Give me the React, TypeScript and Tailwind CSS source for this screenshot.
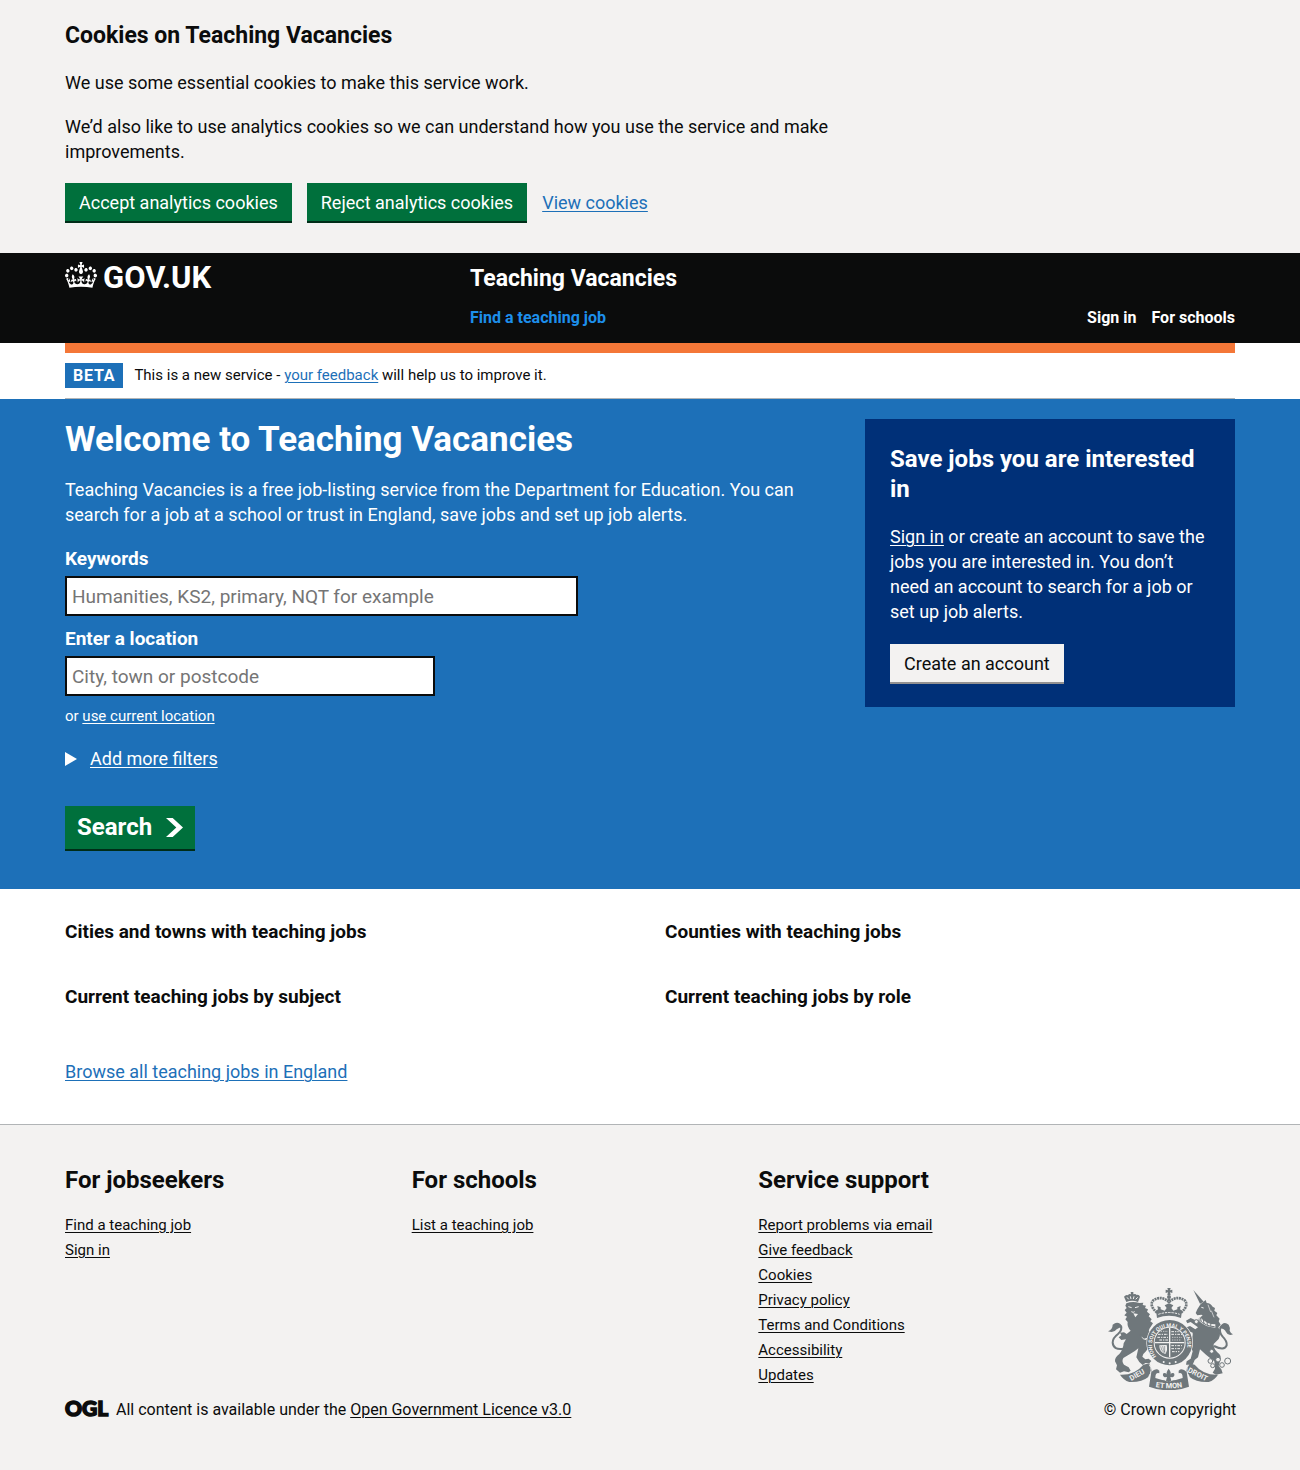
import type { ReactNode } from "react";

function Crown() {
  return (
    <svg aria-hidden="true" className="h-[26px] w-8" viewBox="0 0 132 97" preserveAspectRatio="none" fill="currentColor">
      <path d="M25 30.2c3.5 1.5 7.7-.2 9.1-3.7 1.5-3.6-.2-7.8-3.9-9.2-3.6-1.4-7.6.3-9.1 3.9-1.4 3.5.3 7.5 3.9 9zM9 39.5c3.6 1.5 7.8-.2 9.2-3.7 1.5-3.6-.2-7.8-3.9-9.1-3.6-1.5-7.6.2-9.1 3.8-1.4 3.5.3 7.5 3.8 9zM4.4 57.2c3.5 1.5 7.7-.2 9.1-3.8 1.5-3.6-.2-7.7-3.9-9.1-3.5-1.5-7.6.3-9.1 3.8-1.4 3.5.3 7.6 3.9 9.1zm38.3-21.4c3.5 1.5 7.7-.2 9.1-3.8 1.5-3.6-.2-7.7-3.9-9.1-3.6-1.5-7.6.3-9.1 3.8-1.3 3.6.4 7.7 3.9 9.1zm64.4-5.6c-3.6 1.5-7.8-.2-9.1-3.7-1.5-3.6.2-7.8 3.8-9.2 3.6-1.4 7.7.3 9.2 3.9 1.3 3.5-.4 7.5-3.9 9zm15.9 9.3c-3.6 1.5-7.7-.2-9.1-3.7-1.5-3.6.2-7.8 3.7-9.1 3.6-1.5 7.7.2 9.2 3.8 1.5 3.5-.3 7.5-3.8 9zm4.7 17.7c-3.6 1.5-7.8-.2-9.2-3.8-1.5-3.6.2-7.7 3.9-9.1 3.6-1.5 7.7.3 9.2 3.8 1.3 3.5-.4 7.6-3.9 9.1zM89.3 35.8c-3.6 1.5-7.8-.2-9.2-3.8-1.4-3.6.2-7.7 3.9-9.1 3.6-1.5 7.7.3 9.2 3.8 1.4 3.6-.3 7.7-3.9 9.1zM69.7 17.7l8.9 4.7V9.3l-8.9 2.8c-.2-.3-.5-.6-.9-.9L72.4 0H59.6l3.5 11.2c-.3.3-.6.5-.9.9l-8.8-2.8v13.1l8.8-4.7c.3.3.6.7.9.9l-5 15.4v.1c-.2.8-.4 1.6-.4 2.4 0 4.1 3.1 7.5 7 8.1h.2c.3 0 .7.1 1 .1.4 0 .7 0 1-.1h.2c4-.6 7.1-4.1 7.1-8.1 0-.8-.1-1.7-.4-2.4V34l-5.1-15.4c.4-.2.7-.6 1-.9zM66 92.8c16.9 0 32.8 1.1 47.1 3.2 4-16.9 8.9-26.7 14-33.5l-9.6-3.4c1 4.9 1.1 7.2 0 10.2-1.5-1.4-3-4.3-4.2-8.7L108.6 76c2.8-2 5-3.2 7.5-3.3-4.4 9.4-10 11.9-13.6 11.2-4.3-.8-6.3-4.6-5.6-7.9 1-4.7 5.7-5.9 8-.5 4.3-8.7-3-11.4-7.6-8.8 7.1-7.2 7.9-13.5 2.1-21.1-8 6.1-8.1 12.3-4.5 20.8-4.7-5.4-12.1-2.5-9.5 6.2 3.4-5.2 7.9-2 7.2 3.1-.6 4.3-6.4 7.8-13.5 7.2-10.3-.9-10.9-8-11.2-13.8 2.5-.5 7.1 1.8 11 7.3L80.2 60c-4.1 4.4-8 5.3-12.3 5.4 1.4-4.4 8-11.6 8-11.6H55.5s6.4 7.2 7.9 11.6c-4.2-.1-8-1-12.3-5.4l1.4 16.4c3.9-5.5 8.5-7.7 10.9-7.3-.3 5.8-.9 12.8-11.1 13.8-7.2.6-12.9-2.9-13.5-7.2-.7-5 3.8-8.3 7.1-3.1 2.7-8.7-4.6-11.6-9.4-6.2 3.7-8.5 3.6-14.7-4.6-20.8-5.8 7.6-5 13.9 2.2 21.1-4.7-2.6-11.9.1-7.7 8.8 2.3-5.5 7.1-4.2 8.1.5.7 3.3-1.3 7.1-5.7 7.9-3.5.7-9-1.8-13.5-11.2 2.5.1 4.7 1.3 7.5 3.3l-4.7-15.4c-1.2 4.4-2.7 7.2-4.3 8.7-1.1-3-.9-5.3 0-10.2l-9.5 3.4c5 6.9 9.9 16.7 14 33.5 14.8-2.1 30.8-3.2 47.7-3.2z" />
    </svg>
  );
}

function Crest() {
  const dark = "#6f777b";
  const light = "#f3f2f1";
  return (
    <svg aria-hidden="true" className="h-[102px] w-[125px]" viewBox="36 24 375 306" fill={dark}>
      <defs>
        <path id="garter" d="M181 229 A53 53 0 1 1 261 229" />
        <path id="motto" d="M164 318 Q219 332 274 318" />
      </defs>

      {/* lion's crown */}
      <path d="M91 66 L84 50 Q90 43 96 46 Q99 40 105 43 L104 36 L112 36 L112 43 Q119 40 122 45 Q129 43 132 50 L126 66 Q108 59 91 66 Z" />
      <path d="M93 52 L98 58 M103 49 L105 57 M114 49 L112 57 M125 52 L119 58" stroke={light} strokeWidth="3" />
      {/* lion */}
      <path d="M91 70 Q110 63 130 69 L142 68 L140 75 L150 77 L147 84 L156 88 L153 95 L162 103 L158 109 L167 118 L163 124 L171 130 Q158 146 156 162 L164 186 Q160 204 150 214 Q140 222 139 230 L148 238 L158 236 L166 243 L160 250 L148 249 L140 255 Q128 247 121 232 L127 205 Q116 215 102 222 L82 234 Q76 244 84 254 L98 262 L104 272 L98 277 L84 274 L72 278 L60 268 L63 256 L57 244 Q56 232 70 222 Q82 208 83 190 L90 178 L76 180 L68 172 L76 166 L72 158 L84 157 L92 162 L104 152 Q92 140 95 126 L88 118 L93 110 L85 106 L92 98 L86 90 L92 84 L88 77 Z" />
      <path d="M97 80 l10 3 M117 83 l11 -3 M106 95 q6 4 10 0" fill="none" stroke={light} strokeWidth="3" />
      <path d="M112 100 l6 12 l8 -10 Z" fill={light} />
      <path d="M136 170 Q146 168 154 162 L160 168 L150 180 L142 178 Z" fill={light} />
      <path d="M128 162 Q146 168 158 152 L170 160 L160 172 L144 176 Z" />
      {/* lion's tail */}
      <path d="M84 206 Q52 212 50 188 Q50 174 66 162 Q80 150 74 138 Q68 132 62 140" fill="none" stroke={dark} strokeWidth="6" />
      <path d="M80 142 Q68 120 50 134 Q50 148 36 154 Q54 160 62 148 Q70 142 80 142 Z" />

      {/* horn and unicorn */}
      <path d="M292 30 L323 65 L312 71 Z" />
      <path d="M314 72 L322 66 L329 60 L332 69 Q344 70 350 80 L357 84 L355 92 L364 99 L361 106 L371 116 L368 124 L374 134 L367 142 Q377 160 368 177 L353 192 Q352 206 364 217 Q380 228 372 244 L368 258 L376 268 L380 280 L360 284 L350 278 L357 266 L355 244 Q342 234 330 224 L312 208 L306 232 L296 240 L290 254 L270 254 L272 244 L284 236 L290 214 L280 192 Q292 172 290 158 L276 152 L272 142 L282 138 L298 148 L306 142 L284 126 L274 130 L270 122 L284 114 L302 122 L320 106 L316 104 L304 106 L299 99 L304 88 Z" />
      <path d="M309 116 Q330 138 358 138" fill="none" stroke={light} strokeWidth="10" />
      <path d="M308 118 Q330 140 356 140 M312 113 L316 122 M322 119 L324 131 M333 123 L334 136 M345 125 L344 139" fill="none" stroke={dark} strokeWidth="3" />
      <circle cx="301" cy="125" r="6" fill={light} stroke={dark} strokeWidth="3" />
      <path d="M316 82 l7 2" stroke={light} strokeWidth="3" />
      <path d="M336 74 L344 96 M346 92 L354 112" fill="none" stroke={light} strokeWidth="2" />
      {/* unicorn's tail */}
      <path d="M354 198 Q385 214 392 196 Q394 184 380 170 Q368 156 374 142 Q378 134 386 142" fill="none" stroke={dark} strokeWidth="6" />
      <path d="M370 144 Q382 120 398 134 Q403 142 401 152 Q404 160 411 163 Q396 169 390 156 Q386 146 370 144 Z" />
      {/* chain */}
      <g fill={light} stroke={dark} strokeWidth="3">
        <circle cx="343" cy="243" r="7" />
        <circle cx="350" cy="257" r="6" />
        <circle cx="366" cy="239" r="7" />
        <circle cx="378" cy="255" r="7" />
        <circle cx="395" cy="243" r="9" />
        <circle cx="347" cy="214" r="6" />
      </g>

      {/* royal crown */}
      <path d="M214 24 h10 l-2 7 l7 -2 v10 l-7 -2 l2 8 h-10 l2 -8 l-7 2 v-10 l7 2 Z" />
      <circle cx="219" cy="51" r="6" />
      <path d="M183 98 Q158 76 172 61 Q194 46 217 64 M255 98 Q280 76 266 61 Q244 46 221 64" fill="none" stroke={dark} strokeWidth="8" strokeDasharray="6 2" />
      <path d="M219 56 V92" stroke={dark} strokeWidth="8" strokeDasharray="6 2" />
      <path d="M180 92 L186 88 L184 78 L194 82 L194 88 L206 92 L212 84 L206 76 L219 70 L232 76 L226 84 L232 92 L244 88 L244 82 L254 78 L252 88 L258 92 L255 114 Q219 101 183 114 Z" />
      <path d="M187 103 Q219 92 251 103" fill="none" stroke={light} strokeWidth="3" strokeDasharray="7 3" />

      {/* garter and shield */}
      <circle cx="221" cy="188" r="70" fill={light} />
      <circle cx="221" cy="188" r="68" />
      <text fill={light} fontFamily="Roboto, sans-serif" fontWeight="700" fontSize="16">
        <textPath href="#garter">HONI SOIT QUI MAL Y PENSE</textPath>
      </text>
      <circle cx="221" cy="188" r="48" fill={light} />
      <circle cx="221" cy="188" r="45" />
      <path d="M221 144 V232 M177 188 H265" stroke={light} strokeWidth="4" />
      <path d="M186 163 h30 M184 172 h32 M190 180 h26 M226 155 h22 M226 163 h32 M226 197 h32 M226 206 h30 M228 215 h22" stroke={light} strokeWidth="3" strokeDasharray="8 3 4 3" />
      <path d="M194 154 h22 M228 172 h30 M228 180 h28" stroke={light} strokeWidth="2" strokeDasharray="4 3" />
      <path d="M190 196 q-1 20 18 26 q8 -12 4 -27 Z" fill={light} />
      <path d="M194 199 q1 12 11 20 M200 198 q1 12 7 20 M206 198 v18" fill="none" stroke={dark} strokeWidth="2" />
      <circle cx="203" cy="246" r="3" fill={light} />
      <circle cx="221" cy="250" r="3" fill={light} />
      <circle cx="239" cy="246" r="3" fill={light} />

      {/* scrolls */}
      <path d="M72 284 Q116 286 142 254 L160 250 L168 272 L158 290 Q136 308 100 306 Q82 300 72 284 Z" />
      <path d="M366 284 Q322 286 296 254 L278 250 L270 272 L280 290 Q302 308 338 306 Q356 300 366 284 Z" />
      <path d="M160 254 Q172 270 158 290 M278 254 Q266 270 280 290" fill="none" stroke={light} strokeWidth="3" />
      <path d="M166 276 Q180 262 190 272 L190 280 Q178 276 178 294 Q219 310 260 294 Q260 276 248 280 L248 272 Q258 262 272 276 L279 320 Q219 342 159 320 Z" />
      <g fill={light} fontFamily="Roboto, sans-serif" fontWeight="700" fontSize="22">
        <text transform="translate(106 303) rotate(-30)">DIEU</text>
        <text transform="translate(274 275) rotate(27)">DROIT</text>
        <text>
          <textPath href="#motto" startOffset="50%" textAnchor="middle">ET MON</textPath>
        </text>
      </g>
      {/* fleur-de-lis */}
      <circle cx="218" cy="284" r="21" fill={light} />
      <path d="M218 266 Q228 278 222 286 Q226 276 234 280 Q238 288 230 292 L223 291 L226 302 L218 307 L210 302 L213 291 L206 292 Q198 288 202 280 Q210 276 214 286 Q208 278 218 266 Z" />
    </svg>
  );
}

function OglLogo() {
  return (
    <svg role="img" aria-label="Open Government Licence" className="h-5 w-[41px] overflow-visible" viewBox="0 0 41 20" fill="currentColor">
      <text x="0" y="16" fontFamily="Lato, sans-serif" fontWeight="900" fontSize="21" stroke="currentColor" strokeWidth="1.5">
        OGL
      </text>
    </svg>
  );
}

const link = "underline decoration-1 underline-offset-2";
const blueLink = "text-[#1d70b8] underline decoration-1 underline-offset-2";

function GreenButton({ children }: { children: ReactNode }) {
  return (
    <button type="button" className="bg-[#00703c] px-[14px] pt-2 pb-[7px] leading-[23px] text-white shadow-[0_2px_0_#002d18]">
      {children}
    </button>
  );
}

function FooterColumn({ title, links }: { title: string; links: string[] }) {
  return (
    <section>
      <h2 className="mb-[18px] text-2xl leading-[30px] font-bold">{title}</h2>
      <ul className="text-[15px] leading-[25px]">
        {links.map((text) => (
          <li key={text}>
            <a href="#" className={link}>{text}</a>
          </li>
        ))}
      </ul>
    </section>
  );
}

export default function App() {
  return (
    <div className="bg-white font-[Roboto,sans-serif] text-[18px] leading-[25px] text-[#0b0c0c]">
      <section aria-label="Cookies on Teaching Vacancies" className="bg-[#f3f2f1] pt-5 pb-8">
        <div className="mx-auto w-[90%]">
          <div className="w-2/3">
            <h2 className="mb-[18px] text-[23px] leading-8 font-bold">Cookies on Teaching Vacancies</h2>
            <p className="mb-[19px]">We use some essential cookies to make this service work.</p>
            <p className="mb-[19px]">
              We’d also like to use analytics cookies so we can understand how you use the service and make improvements.
            </p>
          </div>
          <div className="flex items-center gap-[15px]">
            <GreenButton>Accept analytics cookies</GreenButton>
            <GreenButton>Reject analytics cookies</GreenButton>
            <a href="#" className={blueLink}>View cookies</a>
          </div>
        </div>
      </section>

      <header className="bg-[#0b0c0c] text-white">
        <div className="mx-auto flex w-[90%] pt-[9px] pb-[10px]">
          <a href="#" className="flex w-[405px] gap-[6px] self-start">
            <Crown />
            <span className="text-[31px] leading-8 font-bold">GOV.UK</span>
          </a>
          <div className="flex-1">
            <a href="#" className="block text-[23px] leading-[34px] font-bold">Teaching Vacancies</a>
            <nav className="mt-[7px] flex gap-[15px] text-base leading-[30px] font-bold">
              <a href="#" className="mr-auto text-[#1d8feb]">Find a teaching job</a>
              <a href="#">Sign in</a>
              <a href="#">For schools</a>
            </nav>
          </div>
        </div>
      </header>

      <div className="mx-auto flex w-[90%] items-center gap-[11px] border-t-10 border-b border-t-[#f47738] border-b-[#b1b4b6] py-[10px]">
        <strong className="bg-[#1d70b8] px-2 text-base leading-[25px] font-bold tracking-wider text-white">BETA</strong>
        <p className="text-[15px] leading-[25px]">
          This is a new service - <a href="#" className={blueLink}>your feedback</a> will help us to improve it.
        </p>
      </div>

      <main>
        <div className="bg-[#1d70b8] text-white">
          <div className="mx-auto flex w-[90%] items-start justify-between pt-5 pb-10">
            <form className="w-2/3 pr-5" onSubmit={(e) => e.preventDefault()}>
              <h1 className="mb-4 text-[35px] leading-[42px] font-bold">Welcome to Teaching Vacancies</h1>
              <p className="mb-[19px]">
                Teaching Vacancies is a free job-listing service from the Department for Education. You can search for a job at a school or trust in England, save jobs and set up job alerts.
              </p>
              <label htmlFor="keyword" className="mb-[5px] block text-[19px] font-bold">Keywords</label>
              <input
                id="keyword"
                type="text"
                placeholder="Humanities, KS2, primary, NQT for example"
                className="mb-[10px] block h-10 w-full max-w-[513px] border-2 border-[#0b0c0c] bg-white px-[5px] text-[19px] text-[#0b0c0c] placeholder:text-[#757575]"
              />
              <label htmlFor="location" className="mb-[5px] block text-[19px] font-bold">Enter a location</label>
              <input
                id="location"
                type="text"
                placeholder="City, town or postcode"
                className="mb-[10px] block h-10 w-full max-w-[370px] border-2 border-[#0b0c0c] bg-white px-[5px] text-[19px] text-[#0b0c0c] placeholder:text-[#757575]"
              />
              <p className="mb-5 text-[15px] leading-5">
                or <button type="button" className={link}>use current location</button>
              </p>
              <details className="mb-[35px]">
                <summary className="flex list-none items-center gap-[13px]">
                  <svg aria-hidden="true" className="h-[14px] w-3" viewBox="0 0 12 14" fill="currentColor">
                    <path d="M0 0 L12 7 L0 14 Z" />
                  </svg>
                  <span className={link}>Add more filters</span>
                </summary>
              </details>
              <button type="submit" className="flex items-center gap-[14px] bg-[#00703c] px-3 py-[9px] text-2xl leading-[25px] font-bold text-white shadow-[0_2px_0_#002d18]">
                Search
                <svg aria-hidden="true" className="h-[19px] w-[17px]" viewBox="0 0 33 40" preserveAspectRatio="none" fill="currentColor">
                  <path d="M0 0h13l20 20-20 20H0l20-20z" />
                </svg>
              </button>
            </form>

            <aside className="w-[370px] bg-[#003078] p-[25px]">
              <h2 className="mb-5 text-2xl leading-[30px] font-bold">Save jobs you are interested in</h2>
              <p className="mb-5">
                <a href="#" className={link}>Sign in</a> or create an account to save the jobs you are interested in. You don’t need an account to search for a job or set up job alerts.
              </p>
              <button type="button" className="block bg-[#f3f2f1] px-[14px] pt-2 pb-[7px] leading-[23px] text-[#0b0c0c] shadow-[0_2px_0_#929191]">
                Create an account
              </button>
            </aside>
          </div>
        </div>

        <div className="mx-auto w-[90%] pt-[30px] pb-10">
          <div className="grid grid-cols-2 gap-x-[30px] gap-y-10 text-[19px] font-bold">
            <h2>Cities and towns with teaching jobs</h2>
            <h2>Counties with teaching jobs</h2>
            <h2>Current teaching jobs by subject</h2>
            <h2>Current teaching jobs by role</h2>
          </div>
          <p className="mt-[50px]">
            <a href="#" className={blueLink}>Browse all teaching jobs in England</a>
          </p>
        </div>
      </main>

      <footer className="border-t border-[#b1b4b6] bg-[#f3f2f1] pt-10 pb-[50px]">
        <div className="mx-auto flex w-[90%] items-end">
          <div className="flex-1">
            <div className="grid grid-cols-3">
              <FooterColumn title="For jobseekers" links={["Find a teaching job", "Sign in"]} />
              <FooterColumn title="For schools" links={["List a teaching job"]} />
              <FooterColumn
                title="Service support"
                links={["Report problems via email", "Give feedback", "Cookies", "Privacy policy", "Terms and Conditions", "Accessibility", "Updates"]}
              />
            </div>
            <div className="mt-3 flex items-start gap-[10px] text-base leading-5">
              <OglLogo />
              <p>
                All content is available under the <a href="#" className={link}>Open Government Licence v3.0</a>
              </p>
            </div>
          </div>
          <a href="#" className="flex w-[130px] flex-col items-center gap-[10px] text-base leading-5 whitespace-nowrap">
            <Crest />
            © Crown copyright
          </a>
        </div>
      </footer>
    </div>
  );
}
